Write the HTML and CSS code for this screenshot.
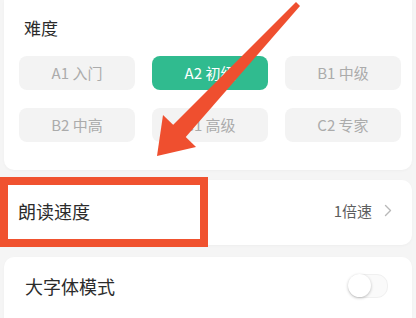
FILE: index.html
```html
<!DOCTYPE html>
<html lang="zh-CN">
<head>
    <meta charset="UTF-8">
    <meta name="viewport" content="width=device-width, initial-scale=1.0">
    <title>阅读设置</title>
    <link rel="stylesheet" href="styles.css">
</head>
<body>
    <div class="page">
        <div class="card level-card">
            <h2 class="card-title">难度</h2>
            <div class="level-grid">
                <div class="chip">A1 入门</div>
                <div class="chip active">A2 初级</div>
                <div class="chip">B1 中级</div>
                <div class="chip">B2 中高</div>
                <div class="chip">C1 高级</div>
                <div class="chip">C2 专家</div>
            </div>
        </div>

        <div class="card row speed-row">
            <span class="row-label">朗读速度</span>
            <span class="row-value">1倍速
                <svg class="chevron" width="8" height="13" viewBox="0 0 8 13">
                    <path d="M1.5 1.5 L6.5 6.5 L1.5 11.5" fill="none" stroke="#b8b8b8" stroke-width="1.4" stroke-linecap="round" stroke-linejoin="round"/>
                </svg>
            </span>
        </div>

        <div class="card row font-row">
            <span class="row-label">大字体模式</span>
            <div class="switch"><div class="knob"></div></div>
        </div>
    </div>

    <!-- annotation overlay -->
    <div class="mark-box"></div>
    <svg class="mark-arrow" width="416" height="318" viewBox="0 0 416 318">
        <polygon points="300,6 296,2 171,127 184,139" fill="#ef4f2f"/>
        <polygon points="157,156 163,115 196,147" fill="#ef4f2f"/>
    </svg>
</body>
</html>
```

FILE: styles.css
```css
body {
    margin: 0;
    background: #f5f5f5;
    font-family: "Noto Sans CJK SC", "Noto Sans", sans-serif;
    color: #333;
    overflow: hidden;
}

.page {
    padding: 0 4px;
}

.card {
    background: #fff;
    border-radius: 10px;
    box-shadow: 0 1px 3px rgba(0, 0, 0, 0.03);
}

.level-card {
    border-radius: 0 0 10px 10px;
    padding: 17px 11px 28px 15px;
}

.card-title {
    margin: 0 0 17px 5px;
    font-size: 17px;
    line-height: 22px;
    font-weight: normal;
    color: #2b2b2b;
}

.level-grid {
    display: grid;
    grid-template-columns: repeat(3, 116px);
    column-gap: 17px;
    row-gap: 18px;
}

.chip {
    height: 34px;
    line-height: 34px;
    border-radius: 8px;
    background: #f3f3f3;
    color: #ababab;
    font-size: 15px;
    text-align: center;
}

.chip.active {
    background: #30bb8f;
    color: #fff;
}

.row {
    display: flex;
    align-items: center;
    justify-content: space-between;
    margin-top: 10px;
}

.speed-row {
    height: 61px;
    padding: 0 20px 4px 14px;
}

.font-row {
    margin-top: 12px;
    height: 58px;
    padding: 0 24px 14px 21px;
}

.row-label {
    font-size: 18px;
    color: #2b2b2b;
}

.row-value {
    display: flex;
    align-items: center;
    gap: 12px;
    font-size: 15px;
    color: #5e5e5e;
}

.switch {
    width: 38px;
    height: 22px;
    border-radius: 11px;
    background: #fafafa;
    border: 1px solid #f0f0f0;
    position: relative;
}

.knob {
    position: absolute;
    left: -1px;
    top: -1px;
    width: 23px;
    height: 23px;
    border-radius: 50%;
    background: #fff;
    box-shadow: 0 1px 3px rgba(0, 0, 0, 0.25);
}

.mark-box {
    position: absolute;
    left: 0;
    top: 177px;
    width: 192px;
    height: 54px;
    border: 8px solid #f0522f;
}

.mark-arrow {
    position: absolute;
    left: 0;
    top: 0;
}
```
